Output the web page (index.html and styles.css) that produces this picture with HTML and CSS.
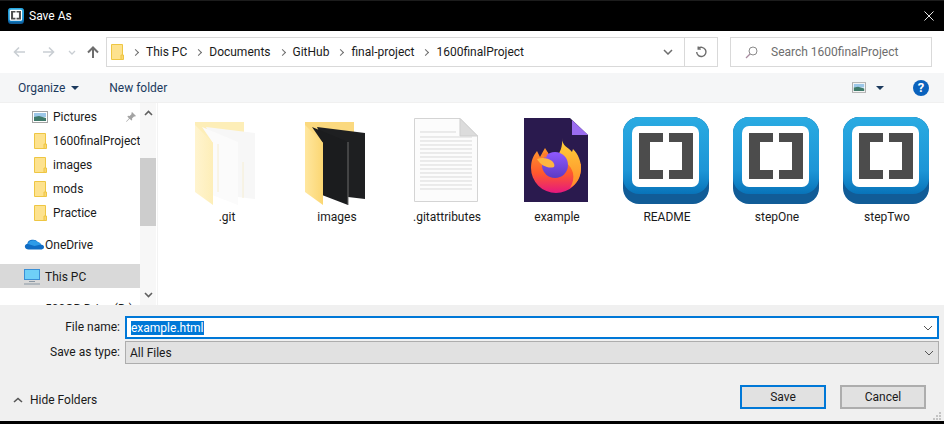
FILE: index.html
```html
<!DOCTYPE html>
<html lang="en">
<head>
  <meta charset="UTF-8">
  <title>Save As</title>
  <link rel="stylesheet" href="styles.css">
</head>
<body>
  <svg class="defs" width="0" height="0">
    <defs>
      <linearGradient id="pale" x1="0" x2="1" y1="0" y2="0"><stop offset="0" stop-color="#fff4cf"/><stop offset="1" stop-color="#fdeeb8"/></linearGradient>
      <linearGradient id="gold" x1="0" x2="1" y1="0" y2="0"><stop offset="0" stop-color="#ffe79f"/><stop offset="1" stop-color="#fbd672"/></linearGradient>
      <linearGradient id="fox" x1="0" x2="0" y1="0" y2="1"><stop offset="0" stop-color="#ff9a2c"/><stop offset=".55" stop-color="#ff5a2c"/><stop offset="1" stop-color="#e6177f"/></linearGradient>
      <linearGradient id="flame" x1="0" x2="0" y1="0" y2="1"><stop offset="0" stop-color="#ffd23a"/><stop offset="1" stop-color="#ff8a2a"/></linearGradient>
      <linearGradient id="ball" x1="0" x2="0" y1="0" y2="1"><stop offset="0" stop-color="#9059ff"/><stop offset="1" stop-color="#5b3bc4"/></linearGradient>
      <linearGradient id="sky" x1="0" x2="0" y1="0" y2="1"><stop offset="0" stop-color="#2aabe2"/><stop offset=".7" stop-color="#1d95d6"/><stop offset="1" stop-color="#0873b9"/></linearGradient>
      <g id="brackets">
        <rect x="4" y="5" width="86" height="87" rx="16" fill="#115c97"/>
        <rect x="4" y="5" width="86" height="77" rx="16" fill="url(#sky)"/>
        <rect x="13" y="14" width="67" height="61" rx="7" fill="#fff"/>
        <path d="M20 21h24v9H31v28h13v9H20zM74 21H50v9h13v28H50v9h24z" fill="#4c4c4c"/>
      </g>
      <g id="small-folder">
        <path d="M.5.5h11v15H.5z" fill="#fde28e" stroke="#eec643"/>
        <path d="M10 11h2.500v4.500H10z" fill="#fbd672" stroke="#eec643"/>
      </g>
      <g id="photo">
        <rect x=".5" y=".5" width="15" height="11" fill="#fff" stroke="#a3a3a3"/>
        <path d="M2 2h12v4H2z" fill="#9cc7e8"/>
        <path d="M2 6l5-1 7 2v3H2z" fill="#3f7a6a"/>
      </g>
    </defs>
  </svg>

  <div class="dialog">
    <header class="titlebar">
      <svg class="app-icon" viewBox="4 5 86 87"><use href="#brackets"/></svg>
      <span class="title">Save As</span>
      <svg class="close" viewBox="0 0 11 11"><path d="M.5.5l10 10M10.500.5l-10 10" stroke="#fff" fill="none"/></svg>
    </header>

    <nav class="navbar">
      <svg class="nav-btn back" viewBox="0 0 12 12"><path d="M12 6H1.500M6 1.500L1.500 6 6 10.500" stroke="#c9ced3" stroke-width="1.600" fill="none"/></svg>
      <svg class="nav-btn forward" viewBox="0 0 12 12"><path d="M0 6h10.500M6 1.500L10.500 6 6 10.500" stroke="#c9ced3" stroke-width="1.600" fill="none"/></svg>
      <svg class="nav-drop" viewBox="0 0 8 5"><path d="M1 1l3 3 3-3" stroke="#c9ced3" stroke-width="1.300" fill="none"/></svg>
      <svg class="nav-btn up" viewBox="0 0 12 12"><path d="M6 12V1.500M1 6.500l5-5 5 5" stroke="#6d6d6d" stroke-width="2" fill="none"/></svg>
      <div class="address">
        <svg class="crumb-folder" viewBox="0 0 13 16"><use href="#small-folder"/></svg>
        <div class="crumbs">
          <i class="sep"></i><span>This PC</span>
          <i class="sep"></i><span>Documents</span>
          <i class="sep"></i><span>GitHub</span>
          <i class="sep"></i><span>final-project</span>
          <i class="sep"></i><span>1600finalProject</span>
        </div>
        <div class="addr-drop"><svg viewBox="0 0 10 6"><path d="M1 1l4 4 4-4" stroke="#6d6d6d" stroke-width="1.500" fill="none"/></svg></div>
        <div class="refresh"><svg viewBox="0 0 12 12"><path d="M3.200 2.500a4.600 4.600 0 1 1-1.500 3.500M3.200 .5v2.600h2.600" stroke="#6d6d6d" stroke-width="1.400" fill="none"/></svg></div>
      </div>
      <div class="search">
        <svg viewBox="0 0 13 13"><circle cx="8" cy="5" r="4" stroke="#8a8a8a" fill="none"/><path d="M5 8l-4 4" stroke="#a98ca0" stroke-width="1.200"/></svg>
        <span>Search 1600finalProject</span>
      </div>
    </nav>

    <div class="toolbar">
      <button class="tool organize">Organize<i class="caret"></i></button>
      <button class="tool">New folder</button>
      <div class="tool-right">
        <svg class="view-icon" viewBox="0 0 16 12"><use href="#photo"/></svg>
        <i class="caret"></i>
        <span class="help">?</span>
      </div>
    </div>

    <main class="browser">
      <aside class="sidebar">
        <ul class="tree">
          <li class="quick"><svg class="tree-photo" viewBox="0 0 16 12"><use href="#photo"/></svg>Pictures
            <svg class="pin" viewBox="0 0 10 10"><path d="M6 0l4 4-1 .6-1-.2L6 6.400l.2 1.600-.8.6L3.600 6.800.6 9.800 0 9.400l3-3L1.400 4.600 2 3.800l1.600.2L5.600 2l-.2-1z" fill="#a3a3a3"/></svg>
          </li>
          <li class="quick"><svg class="tree-folder" viewBox="0 0 13 16"><use href="#small-folder"/></svg>1600finalProject</li>
          <li class="quick"><svg class="tree-folder" viewBox="0 0 13 16"><use href="#small-folder"/></svg>images</li>
          <li class="quick"><svg class="tree-folder" viewBox="0 0 13 16"><use href="#small-folder"/></svg>mods</li>
          <li class="quick"><svg class="tree-folder" viewBox="0 0 13 16"><use href="#small-folder"/></svg>Practice</li>
          <li class="top gap"><svg class="tree-top" viewBox="0 0 16 11" preserveAspectRatio="none"><path d="M3.500 10.500A3 3 0 0 1 2.600 4.700 4.200 4.200 0 0 1 10.500 3a3.500 3.500 0 0 1 2.500 2.600 2.500 2.500 0 0 1 .5 4.900z" fill="#0f6cc4"/><path d="M3 5a4.200 4.200 0 0 1 7.500-2A3.500 3.500 0 0 1 13 5.600L8 7z" fill="#2d9be8"/></svg>OneDrive</li>
          <li class="top selected gap"><svg class="tree-top pc" viewBox="0 0 16 16"><path d="M0 0h16v11H0z" fill="#3a8fd6"/><path d="M1 1h14v9H1z" fill="#6fd0f7"/><path d="M5 12h6v1H5zM0 14.500h16v1H0z" fill="#8a97a3"/></svg>This PC</li>
          <li class="top gap"><span class="tree-blank"></span>500GB Drive (D:)</li>
        </ul>
      </aside>
      <div class="scrollbar">
        <svg class="arrow" viewBox="0 0 9 6"><path d="M1 5l3.500-3.500L8 5" stroke="#5f5f5f" stroke-width="1.600" fill="none"/></svg>
        <div class="track"><div class="thumb"></div></div>
        <svg class="arrow" viewBox="0 0 9 6"><path d="M1 1l3.500 3.500L8 1" stroke="#5f5f5f" stroke-width="1.600" fill="none"/></svg>
      </div>

      <section class="files">
        <figure class="file">
          <svg viewBox="0 0 96 96">
            <path d="M16 10h49v60H16z" fill="#fdeeb8"/>
            <path d="M27 15l49 6v66l-17-2z" fill="#f7f7f7"/>
            <path d="M23 15l36 15v63l-26-10 1-52z" fill="#fbfbfb"/>
            <path d="M16 13l18 18v62L16 80z" fill="url(#pale)"/>
            <path d="M39 32v48M64 50v36" stroke="#f6eed2" fill="none"/>
          </svg>
          <figcaption>.git</figcaption>
        </figure>
        <figure class="file">
          <svg viewBox="0 0 96 96">
            <path d="M16 10h49v60H16z" fill="#fbd97f"/>
            <path d="M28 15l48 6v66l-17-2z" fill="#1e1f21"/>
            <path d="M23 15l36 15v63l-26-10 1-52z" fill="#1b1c1e"/>
            <path d="M16 13l18 18v62L16 80z" fill="url(#gold)"/>
            <path d="M59 30v63" stroke="#6a6a6a" fill="none"/>
          </svg>
          <figcaption>images</figcaption>
        </figure>
        <figure class="file">
          <svg viewBox="0 0 96 96">
            <path d="M15.500 6.500H61L78.500 24v65.500h-63z" fill="#fcfcfc" stroke="#d4d4d4"/>
            <path d="M61 6.500V24h17.500z" fill="#dcdcdc" stroke="#cfcfcf"/>
            <path d="M21 20h36M21 25h52M21 29h52M21 33h52M21 37h52M21 41h52M21 45h52M21 49h52M21 53h52M21 57h52M21 61h52M21 65h52M21 69h52M21 73h52M21 77h52" stroke="#d9d9d9" fill="none"/>
          </svg>
          <figcaption>.gitattributes</figcaption>
        </figure>
        <figure class="file">
          <svg viewBox="0 0 96 96">
            <path d="M15 6h46l18 17v67H15z" fill="#2a1a4e"/>
            <path d="M63 8l16 15H63z" fill="#9a6df0"/>
            <path d="M22 56c0-7 2-12 6-17l3 6 5-9 5 8h14l17 8v4a25 25 0 0 1-50 0z" fill="url(#fox)"/>
            <path d="M53 26c0 8 6 9 10 14l1-3c5 5 8 12 8 19 0 9-4 16-11 20 3-5 4-10 3-15-2-8-9-13-17-15 4-5 7-12 6-20z" fill="url(#flame)"/>
            <circle cx="46" cy="53" r="13" fill="url(#ball)"/>
            <path d="M28 47c5-2 11-1 15 2 2 2 3 4 2 6-5 2-13-1-17-8z" fill="#ffb640"/>
            <path d="M33 42l6-2-2 6z" fill="#ff7a2c"/>
          </svg>
          <figcaption>example</figcaption>
        </figure>
        <figure class="file">
          <svg viewBox="0 0 96 96"><use href="#brackets"/></svg>
          <figcaption>README</figcaption>
        </figure>
        <figure class="file">
          <svg viewBox="0 0 96 96"><use href="#brackets"/></svg>
          <figcaption>stepOne</figcaption>
        </figure>
        <figure class="file">
          <svg viewBox="0 0 96 96"><use href="#brackets"/></svg>
          <figcaption>stepTwo</figcaption>
        </figure>
      </section>
    </main>

    <footer class="footer">
      <div class="fields">
        <label class="field-label">File name:</label>
        <div class="field name-field">
          <span class="picked">example.html</span>
          <svg class="chev" viewBox="0 0 10 6"><path d="M1 1l4 4 4-4" stroke="#555" fill="none"/></svg>
        </div>
        <label class="field-label">Save as type:</label>
        <div class="field type-field">
          <span>All Files</span>
          <svg class="chev" viewBox="0 0 10 6"><path d="M1 1l4 4 4-4" stroke="#555" fill="none"/></svg>
        </div>
      </div>
      <div class="actions">
        <div class="hide-folders">
          <svg viewBox="0 0 10 6"><path d="M1 5l4-3.500L9 5" stroke="#555" stroke-width="1.600" fill="none"/></svg>
          <span>Hide Folders</span>
        </div>
        <button class="btn primary">Save</button>
        <button class="btn">Cancel</button>
      </div>
      <svg class="grip" viewBox="0 0 8 8"><path d="M6 0h2v2H6zM3 3h2v2H3zM6 3h2v2H6zM0 6h2v2H0zM3 6h2v2H3zM6 6h2v2H6z" fill="#c4c4c4"/></svg>
    </footer>
  </div>
</body>
</html>
```

FILE: styles.css
```css
* {
  box-sizing: border-box;
}
html, body {
  margin: 0;
  height: 100%;
  overflow: hidden;
}
body {
  font-family: Roboto, "Noto Sans", sans-serif;
  font-size: 12px;
  color: #1a1a1a;
  background: #000;
}
svg {
  display: block;
  flex: none;
}
.defs {
  position: absolute;
}
.dialog {
  display: flex;
  flex-direction: column;
  width: 944px;
  height: 424px;
  padding-bottom: 3px;
}

/* title bar */
.titlebar {
  display: flex;
  align-items: center;
  height: 31px;
  padding: 0 10px 0 8px;
  color: #fff;
  background: #000;
  border-top: 1px solid #1c1c1c;
}
.app-icon {
  width: 16px;
  height: 16px;
}
.title {
  margin-left: 5px;
}
.close {
  width: 10px;
  height: 10px;
  margin-left: auto;
}

/* back, forward, address, search */
.navbar {
  display: flex;
  align-items: center;
  height: 42px;
  padding-left: 13px;
  background: #fff;
}
.nav-btn {
  width: 12px;
  height: 12px;
}
.forward {
  margin-left: 18px;
}
.nav-drop {
  width: 8px;
  height: 5px;
  margin-left: 13px;
}
.up {
  margin-left: 11px;
}
.address {
  display: flex;
  align-items: center;
  width: 612px;
  height: 30px;
  margin-left: 7px;
  padding-left: 4px;
  border: 1px solid #d9d9d9;
}
.crumb-folder {
  width: 13px;
  height: 16px;
}
.crumbs {
  display: flex;
  align-items: center;
  flex: 1;
  padding-left: 4px;
  white-space: nowrap;
}
.crumbs span {
  margin-right: 4px;
}
.sep {
  width: 5px;
  height: 5px;
  margin: 0 8px 0 5px;
  border-top: 1.500px solid #6d6d6d;
  border-right: 1.500px solid #6d6d6d;
  transform: rotate(45deg);
}
.addr-drop {
  display: flex;
  align-items: center;
  justify-content: center;
  width: 33px;
  height: 100%;
}
.addr-drop svg {
  width: 10px;
  height: 6px;
}
.refresh {
  display: flex;
  align-items: center;
  justify-content: center;
  width: 33px;
  height: 100%;
  border-left: 1px solid #d9d9d9;
}
.refresh svg {
  width: 12px;
  height: 12px;
}
.search {
  display: flex;
  align-items: center;
  width: 202px;
  height: 30px;
  margin-left: 12px;
  padding-left: 14px;
  color: #6d6d6d;
  border: 1px solid #d9d9d9;
}
.search svg {
  width: 13px;
  height: 13px;
  margin-right: 13px;
}

/* organize bar */
.toolbar {
  display: flex;
  align-items: center;
  height: 30px;
  padding: 0 15px 0 18px;
  background: #f5f6f7;
  border-bottom: 1px solid #f0f0f0;
}
.tool {
  display: flex;
  align-items: center;
  padding: 0;
  border: 0;
  background: none;
  font: inherit;
  color: #1c3a5e;
}
.organize {
  margin-right: 30px;
}
.caret {
  display: block;
  width: 0;
  height: 0;
  margin-left: 6px;
  border-left: 4px solid transparent;
  border-right: 4px solid transparent;
  border-top: 4px solid #1c3a5e;
}
.tool-right {
  display: flex;
  align-items: center;
  margin-left: auto;
}
.view-icon {
  width: 14px;
  height: 11px;
}
.tool-right .caret {
  margin-left: 10px;
}
.help {
  width: 16px;
  height: 16px;
  margin-left: 29px;
  border-radius: 50%;
  background: #0a62bd;
  color: #fff;
  font-size: 13px;
  font-weight: 700;
  line-height: 16px;
  text-align: center;
}

/* folders tree and icons */
.browser {
  display: flex;
  height: 202px;
  background: #fff;
}
.sidebar {
  width: 140px;
  overflow: hidden;
}
.tree {
  margin: 0;
  padding: 1px 0 0;
  list-style: none;
}
.tree li {
  display: flex;
  align-items: center;
  height: 24px;
  padding-top: 1px;
  white-space: nowrap;
}
.quick {
  padding-left: 34px;
}
.tree-folder {
  width: 13px;
  height: 16px;
  margin-right: 6px;
}
.tree-photo {
  width: 16px;
  height: 12px;
  margin: 0 5px 0 -2px;
}
.pin {
  width: 10px;
  height: 10px;
  margin-left: auto;
  margin-right: 4px;
}
.top {
  padding-left: 24px;
}
.tree-top {
  width: 21px;
  height: 11px;
}
.tree-top.pc {
  width: 16px;
  height: 16px;
  margin-right: 5px;
}
.tree-blank {
  width: 21px;
}
.gap {
  margin-top: 8px;
}
.selected {
  background: #d9d9d9;
}
.scrollbar {
  display: flex;
  flex-direction: column;
  align-items: center;
  width: 16px;
  padding: 7px 0;
  background: #f7f7f7;
}
.arrow {
  width: 9px;
  height: 6px;
}
.track {
  flex: 1;
  width: 100%;
  padding-top: 42px;
}
.thumb {
  height: 68px;
  background: #cdcdcd;
}
.files {
  display: flex;
  flex: 1;
  padding: 9px 0 0 14px;
  border-left: 1px solid #f3f3f3;
  margin-left: 1px;
}
.file {
  width: 110px;
  margin: 0;
  padding-left: 7px;
}
.file svg {
  width: 96px;
  height: 96px;
}
.file figcaption {
  margin: 1px 0 0 -7px;
  line-height: 16px;
  text-align: center;
}

/* name fields and buttons */
.footer {
  position: relative;
  flex: 1;
  padding: 11px 5px 0 0;
  background: #f0f0f0;
}
.fields {
  display: grid;
  grid-template-columns: 120px 1fr;
  column-gap: 5px;
  row-gap: 2px;
}
.field-label {
  line-height: 23px;
  text-align: right;
}
.field {
  display: flex;
  align-items: center;
  justify-content: space-between;
  height: 23px;
  padding: 0 4px;
}
.name-field {
  background: #fff;
  border: 2px solid #0078d7;
}
.type-field {
  background: #e1e1e1;
  border: 1px solid #adadad;
}
.picked {
  color: #fff;
  background: #0078d7;
}
.chev {
  width: 10px;
  height: 6px;
}
.actions {
  display: flex;
  align-items: center;
  margin-top: 21px;
  padding-right: 13px;
}
.hide-folders {
  display: flex;
  align-items: center;
  margin-right: auto;
  padding: 5px 0 0 13px;
}
.hide-folders svg {
  width: 10px;
  height: 6px;
  margin-right: 7px;
}
.btn {
  width: 86px;
  height: 24px;
  margin-left: 14px;
  padding: 0;
  background: #e1e1e1;
  border: 2px solid #adadad;
  font: inherit;
  color: #1a1a1a;
}
.primary {
  border-color: #0078d7;
}
.grip {
  position: absolute;
  right: 3px;
  bottom: 1px;
  width: 8px;
  height: 8px;
}
```
